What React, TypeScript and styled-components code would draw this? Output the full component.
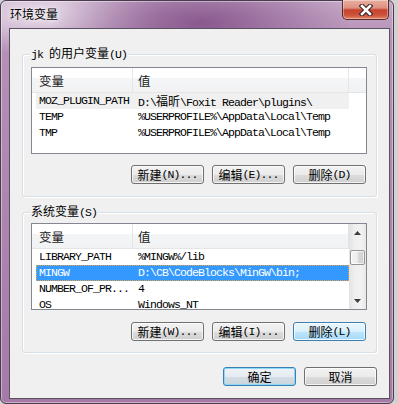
import React from "react";
import styled, { createGlobalStyle, css } from "styled-components";

const MONO = `"Liberation Mono", "Noto Sans CJK SC", monospace`;
const CJKF = `"Noto Sans CJK SC", "Microsoft YaHei", sans-serif`;

const Global = createGlobalStyle`
  html, body { margin: 0; padding: 0; background: #d2d2d2; width: 398px; height: 404px; overflow: hidden; }
  #root { width: 398px; height: 404px; }
`;

const Window = styled.div`
  box-sizing: border-box;
  width: 394px;
  height: 404px;
  border: 1px solid #4a3b4f;
  border-radius: 6px;
  padding: 0 3px 4px 8px;
  display: flex;
  flex-direction: column;
  background:
    radial-gradient(ellipse 150px 55px at 200px 22px, rgba(135, 85, 140, 0.95), rgba(135, 85, 140, 0)),
    radial-gradient(ellipse 120px 40px at 40px 14px, rgba(235, 225, 236, 0.9), rgba(235, 225, 236, 0)),
    linear-gradient(to bottom, #c4a8c6 0px, #b490b7 40px, #a57aa7 100%);
  box-shadow: inset 0 0 0 1px rgba(255, 255, 255, 0.4);
`;

const TitleBar = styled.div`
  height: 27px;
  flex-shrink: 0;
  display: flex;
  justify-content: space-between;
  align-items: flex-start;
`;

const Title = styled.div`
  margin-top: 5px;
  padding-left: 1px;
  font-family: ${CJKF};
  font-size: 12px;
  line-height: 16px;
  color: #000;
  text-shadow: 0 0 6px rgba(255, 255, 255, 0.9), 0 0 3px rgba(255, 255, 255, 0.7);
`;

const CloseButton = styled.div`
  box-sizing: border-box;
  width: 47px;
  height: 20px;
  margin-top: -1px;
  margin-right: 1px;
  border: 1px solid #5a2a2a;
  border-top: none;
  border-radius: 0 0 5px 5px;
  background: linear-gradient(to bottom, #eab0a2 0%, #dd907f 42%, #c7442f 52%, #cb5139 78%, #e2846a 100%);
  box-shadow: inset 0 0 0 1px rgba(255, 255, 255, 0.35);
  display: flex;
  align-items: center;
  justify-content: center;
`;

const Client = styled.div`
  box-sizing: border-box;
  width: 381px;
  height: 371px;
  border: 1px solid #5a5060;
  background: #f0f0f0;
  display: flex;
  flex-direction: column;
`;

const GroupBox = styled.div<{ $mt: number; $pt: number; $pb: number }>`
  position: relative;
  box-sizing: border-box;
  width: 355px;
  margin-left: 12px;
  margin-top: ${(p) => p.$mt}px;
  padding: ${(p) => p.$pt}px 9px ${(p) => p.$pb}px 8px;
  border: 1px solid #d5dfe5;
  border-radius: 3px;
  box-shadow: inset 1px 1px 0 #fff, 1px 1px 0 #fff;
  display: flex;
  flex-direction: column;
`;

const GroupLabel = styled.div`
  position: absolute;
  top: -10px;
  left: 7px;
  padding: 0 1px;
  height: 16px;
  line-height: 16px;
  background: #f0f0f0;
  font-family: ${MONO};
  font-size: 11.5px;
  letter-spacing: -0.9px;
  color: #000;
  white-space: nowrap;
`;

const Cjk = styled.span`
  font-family: ${CJKF};
  font-size: 12px;
  letter-spacing: 0;
`;

const List = styled.div`
  box-sizing: border-box;
  width: 336px;
  height: 87px;
  border: 1px solid #828790;
  background: #fff;
  display: flex;
  overflow: hidden;
`;

const ListMain = styled.div`
  flex: 1;
  min-width: 0;
  display: flex;
  flex-direction: column;
`;

const Header = styled.div`
  box-sizing: border-box;
  height: 25px;
  flex-shrink: 0;
  display: flex;
  border-bottom: 1px solid #e5e5e5;
  background: linear-gradient(to bottom, #ffffff 0%, #ffffff 40%, #f4f5f6 41%, #f1f2f4 100%);
`;

const HeaderCell = styled.div<{ $w?: number; $pl: number }>`
  box-sizing: border-box;
  ${(p) => (p.$w ? css`width: ${p.$w}px;` : css`flex: 1;`)}
  flex-shrink: 0;
  padding: 3px 0 0 ${(p) => p.$pl}px;
  line-height: 20px;
  border-right: ${(p) => (p.$w ? "1px solid #e3e5e7" : "none")};
  font-family: ${CJKF};
  font-size: 12.5px;
  color: #1b1b1b;
`;

const Rows = styled.div`
  flex: 1;
  overflow: hidden;
`;

const Row = styled.div<{ $state?: "none" | "inactive" | "selected" }>`
  box-sizing: border-box;
  width: 313px;
  height: 16px;
  margin-left: 4px;
  display: flex;
  font-family: ${MONO};
  font-size: 11.5px;
  letter-spacing: -0.9px;
  line-height: 16px;
  white-space: nowrap;
  color: #000;
  ${(p) =>
    p.$state === "inactive" &&
    css`
      background: #f0f0f0;
    `}
  ${(p) =>
    p.$state === "selected" &&
    css`
      background: #3399ff;
      color: #fff;
      outline: 1px dotted #f2a23c;
      outline-offset: -1px;
    `}
`;

const Cell = styled.div<{ $w?: number; $pl: number }>`
  box-sizing: border-box;
  ${(p) => (p.$w ? css`width: ${p.$w}px; flex-shrink: 0;` : css`flex: 1;`)}
  padding-left: ${(p) => p.$pl}px;
  overflow: hidden;
`;

const ScrollBar = styled.div`
  width: 17px;
  flex-shrink: 0;
  display: flex;
  flex-direction: column;
  background: linear-gradient(to right, #e3e3e3 0%, #eeeeee 30%, #f2f2f2 70%, #e8e8e8 100%);
`;

const ScrollBtn = styled.div`
  height: 17px;
  flex-shrink: 0;
  display: flex;
  align-items: center;
  justify-content: center;
`;

const Track = styled.div<{ $h?: number }>`
  ${(p) => (p.$h ? css`height: ${p.$h}px; flex-shrink: 0;` : css`flex: 1;`)}
`;

const Thumb = styled.div`
  box-sizing: border-box;
  height: 15px;
  margin: 0 1px;
  flex-shrink: 0;
  border: 1px solid #959595;
  border-radius: 2px;
  background: linear-gradient(to right, #f5f5f5 0%, #ececec 50%, #dadada 51%, #d0d0d0 100%);
  box-shadow: inset 0 0 0 1px rgba(255, 255, 255, 0.7);
`;

const ButtonRow = styled.div<{ $mt: number }>`
  display: flex;
  justify-content: flex-end;
  gap: 8px;
  margin-top: ${(p) => p.$mt}px;
  padding-right: 1px;
`;

const Footer = styled.div`
  display: flex;
  justify-content: flex-end;
  gap: 8px;
  margin-top: 14px;
  padding-right: 12px;
`;

type Variant = "normal" | "hot" | "default";

const Button = styled.div<{ $variant?: Variant }>`
  box-sizing: border-box;
  width: 73px;
  height: 19px;
  border: 1px solid #707070;
  border-radius: 3px;
  display: flex;
  align-items: center;
  justify-content: center;
  font-family: ${MONO};
  font-size: 11.5px;
  letter-spacing: -0.9px;
  line-height: 17px;
  color: #000;
  white-space: nowrap;
  background: linear-gradient(to bottom, #f2f2f2 0%, #ebebeb 50%, #dddddd 51%, #cfcfcf 100%);
  box-shadow: inset 0 0 0 1px rgba(255, 255, 255, 0.75);
  ${(p) =>
    p.$variant === "hot" &&
    css`
      border-color: #3c7fb1;
      background: linear-gradient(to bottom, #eaf6fd 0%, #d9f0fc 50%, #bee6fd 51%, #a7d9f5 100%);
    `}
  ${(p) =>
    p.$variant === "default" &&
    css`
      border-color: #3c7fb1;
      background: linear-gradient(to bottom, #eef3f7 0%, #e5ebf0 50%, #d5dee5 51%, #c9d4dc 100%);
      box-shadow: inset 0 0 0 1px #8fd7f7;
    `}
`;

const Arrow = ({ up }: { up?: boolean }) => (
  <svg width="7" height="4" viewBox="0 0 7 4">
    <polygon points={up ? "3.5,0 7,4 0,4" : "0,0 7,0 3.5,4"} fill="#3d3d3d" />
  </svg>
);

const CloseX = () => (
  <svg width="14" height="12" viewBox="0 0 14 12">
    <path d="M3 2 L11 10 M11 2 L3 10" stroke="#3a2020" strokeWidth="4.6" strokeLinecap="square" />
    <path d="M3 2 L11 10 M11 2 L3 10" stroke="#ffffff" strokeWidth="2.6" strokeLinecap="square" />
  </svg>
);

type RowData = { name: React.ReactNode; value: React.ReactNode; state?: "none" | "inactive" | "selected" };

const VarList = ({ rows, scroll }: { rows: RowData[]; scroll?: boolean }) => (
  <List>
    <ListMain>
      <Header>
        <HeaderCell $w={101} $pl={7}>变量</HeaderCell>
        <HeaderCell $w={216} $pl={5}>值</HeaderCell>
        {!scroll && <HeaderCell $pl={0} />}
      </Header>
      <Rows>
        {rows.map((r, i) => (
          <Row key={i} $state={r.state}>
            <Cell $w={97} $pl={3}>{r.name}</Cell>
            <Cell $pl={5}>{r.value}</Cell>
          </Row>
        ))}
      </Rows>
    </ListMain>
    {scroll && (
      <ScrollBar>
        <ScrollBtn>
          <Arrow up />
        </ScrollBtn>
        <Track $h={9} />
        <Thumb />
        <Track />
        <ScrollBtn>
          <Arrow />
        </ScrollBtn>
      </ScrollBar>
    )}
  </List>
);

const userRows: RowData[] = [
  {
    name: "MOZ_PLUGIN_PATH",
    value: (
      <>
        D:\<Cjk>福昕</Cjk>\Foxit Reader\plugins\
      </>
    ),
    state: "inactive",
  },
  { name: "TEMP", value: "%USERPROFILE%\\AppData\\Local\\Temp" },
  { name: "TMP", value: "%USERPROFILE%\\AppData\\Local\\Temp" },
];

const sysRows: RowData[] = [
  { name: "LIBRARY_PATH", value: "%MINGW%/lib" },
  { name: "MINGW", value: "D:\\CB\\CodeBlocks\\MinGW\\bin;", state: "selected" },
  { name: "NUMBER_OF_PR...", value: "4" },
  { name: "OS", value: "Windows_NT" },
];

const Label = ({ cjk, rest }: { cjk: string; rest: string }) => (
  <>
    <Cjk>{cjk}</Cjk>
    {rest}
  </>
);

export default function App() {
  return (
    <>
      <Global />
      <Window>
        <TitleBar>
          <Title>环境变量</Title>
          <CloseButton>
            <CloseX />
          </CloseButton>
        </TitleBar>
        <Client>
          <GroupBox $mt={25} $pt={12} $pb={12}>
            <GroupLabel>
              jk <Cjk>的用户变量</Cjk>(U)
            </GroupLabel>
            <VarList rows={userRows} />
            <ButtonRow $mt={11}>
              <Button><Label cjk="新建" rest="(N)..." /></Button>
              <Button><Label cjk="编辑" rest="(E)..." /></Button>
              <Button><Label cjk="删除" rest="(D)" /></Button>
            </ButtonRow>
          </GroupBox>
          <GroupBox $mt={15} $pt={10} $pb={11}>
            <GroupLabel>
              <Cjk>系统变量</Cjk>(S)
            </GroupLabel>
            <VarList rows={sysRows} scroll />
            <ButtonRow $mt={12}>
              <Button><Label cjk="新建" rest="(W)..." /></Button>
              <Button><Label cjk="编辑" rest="(I)..." /></Button>
              <Button $variant="hot"><Label cjk="删除" rest="(L)" /></Button>
            </ButtonRow>
          </GroupBox>
          <Footer>
            <Button $variant="default"><Cjk>确定</Cjk></Button>
            <Button><Cjk>取消</Cjk></Button>
          </Footer>
        </Client>
      </Window>
    </>
  );
}
